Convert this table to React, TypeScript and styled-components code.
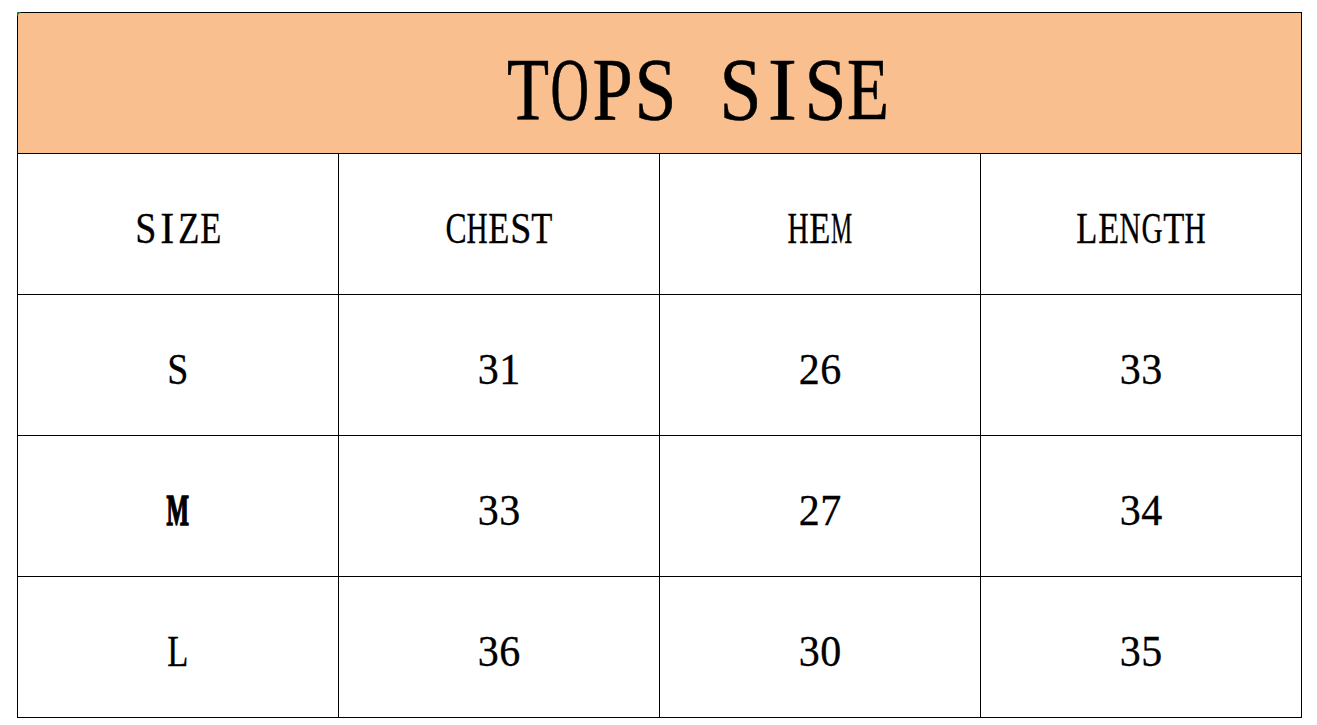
import styled, { createGlobalStyle } from "styled-components";

const GlobalStyle = createGlobalStyle`
  html, body {
    margin: 0;
    padding: 0;
    background: #ffffff;
  }
`;

const Page = styled.div`
  padding: 12px 0 0 17px;
  font-family: "Liberation Serif", "DejaVu Serif", serif;
  color: #000000;
`;

const Table = styled.div`
  position: relative;
  width: 1284px;
  border-left: 1px solid #000;
  border-top: 1px solid #000;
  display: grid;
  grid-template-columns: repeat(4, 321px);
  grid-auto-rows: 141px;

  &::before {
    content: "";
    position: absolute;
    left: -1px;
    top: -1px;
    width: 0;
    height: 0;
    border-top: 4px solid #2e7d32;
    border-right: 4px solid transparent;
  }
`;

const TitleCell = styled.div`
  grid-column: 1 / -1;
  background: #f9bf8f;
  border-right: 1px solid #000;
  border-bottom: 1px solid #000;
  display: flex;
  align-items: center;
  justify-content: center;
  padding: 12px 0 0 76px;
  font-size: 88px;
  -webkit-text-stroke: 0.6px #000;
`;

const Cell = styled.div<{ $bold?: boolean }>`
  border-right: 1px solid #000;
  border-bottom: 1px solid #000;
  display: flex;
  align-items: center;
  justify-content: center;
  padding-top: 8px;
  font-size: 42px;
  font-weight: ${(p) => (p.$bold ? 700 : 400)};
  -webkit-text-stroke: ${(p) => (p.$bold ? "1.6px" : "0.3px")} #000;
`;

const Glyph = styled.span<{ $advance: number }>`
  display: inline-flex;
  justify-content: center;
  width: ${(p) => p.$advance}px;
  white-space: pre;
`;

const GlyphInk = styled.span<{ $sx: number; $sy: number }>`
  display: inline-block;
  transform: scale(${(p) => p.$sx}, ${(p) => p.$sy});
`;

// Liberation Serif metrics, in em: [advance, ink width]
const serif: Record<string, [number, number]> = {
  C: [0.667, 0.6], H: [0.722, 0.7], E: [0.611, 0.57], S: [0.556, 0.46],
  T: [0.611, 0.57], M: [0.889, 0.86], L: [0.611, 0.56], N: [0.722, 0.7],
  G: [0.722, 0.68], Z: [0.611, 0.57], O: [0.722, 0.66], P: [0.556, 0.5],
  I: [0.333, 0.3],
};

// ink widths of the narrow look in the picture, in em
const targetInk: Record<string, number> = {
  M: 0.66, O: 0.4, P: 0.41, S: 0.46, T: 0.49,
};

const scaleFor = (ch: string, size: number, advance: number): number => {
  const m = serif[ch];
  if (!m) return 1;
  const target = targetInk[ch] ?? 0.5;
  return Math.min(1, target / m[1], (advance - 0.5) / (m[0] * size));
};

type MonoProps = { text: string; size: number; advance: number; sy: number };

const MonoText = ({ text, size, advance, sy }: MonoProps): JSX.Element => (
  <>
    {text.split("").map((ch, i) => (
      <Glyph key={i} $advance={advance}>
        <GlyphInk $sx={scaleFor(ch, size, advance)} $sy={sy}>
          {ch === " " ? "\u00a0" : ch}
        </GlyphInk>
      </Glyph>
    ))}
  </>
);

const headers = ["SIZE", "CHEST", "HEM", "LENGTH"];
const rows = [
  ["S", "31", "26", "33"],
  ["M", "33", "27", "34"],
  ["L", "36", "30", "35"],
];

const App = (): JSX.Element => {
  return (
    <>
      <GlobalStyle />
      <Page>
        <Table>
          <TitleCell>
            <MonoText text="TOPS SISE" size={88} advance={42.5} sy={1} />
          </TitleCell>
          {headers.map((h) => (
            <Cell key={h}>
              <MonoText text={h} size={42} advance={21.6} sy={1.06} />
            </Cell>
          ))}
          {rows.map((row) =>
            row.map((value, i) => (
              <Cell key={row[0] + i} $bold={i === 0 && value === "M"}>
                <MonoText text={value} size={42} advance={21.6} sy={1.06} />
              </Cell>
            ))
          )}
        </Table>
      </Page>
    </>
  );
};

export default App;
